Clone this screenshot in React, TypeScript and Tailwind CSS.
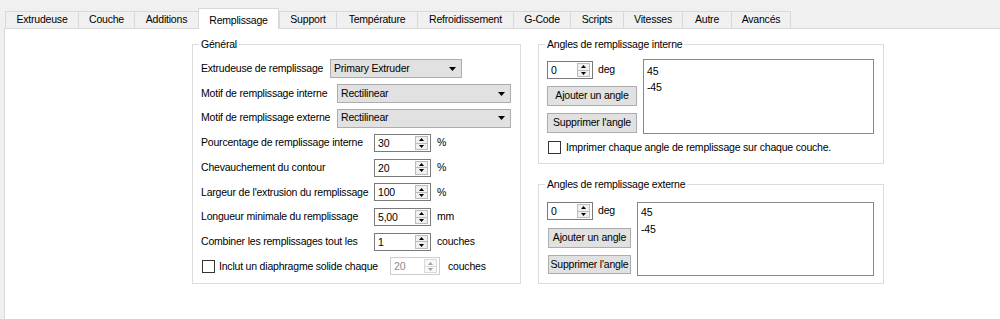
import React from 'react';

const tabs: [string, string][] = [
    ['Extrudeuse', 'w-[73px]'],
    ['Couche', 'w-[56px]'],
    ['Additions', 'w-[64px]'],
    ['Remplissage', 'w-[81px]'],
    ['Support', 'w-[57px]'],
    ['Température', 'w-[81px]'],
    ['Refroidissement', 'w-[96px]'],
    ['G-Code', 'w-[57px]'],
    ['Scripts', 'w-[53px]'],
    ['Vitesses', 'w-[59px]'],
    ['Autre', 'w-[49px]'],
    ['Avancés', 'w-[60px] border-r'],
];

function SpinArrows({ disabled }: { disabled?: boolean }) {
    const fill = disabled ? '#a0a0a0' : '#000000';
    return (
        <div
            className={`my-[1px] mr-[2px] flex w-[13px] flex-col border ${
                disabled ? 'border-[#d9d9d9] bg-[#f7f7f7]' : 'border-[#bcbcbc] bg-[#f0f0f0]'
            }`}
        >
            <div className="flex flex-1 items-center justify-center">
                <svg width="5" height="3" viewBox="0 0 5 3">
                    <path d="M0 3 L2.5 0 L5 3 Z" fill={fill} />
                </svg>
            </div>
            <div className={`h-px ${disabled ? 'bg-[#dcdcdc]' : 'bg-[#bcbcbc]'}`} />
            <div className="flex flex-1 items-center justify-center">
                <svg width="5" height="3" viewBox="0 0 5 3">
                    <path d="M0 0 L5 0 L2.5 3 Z" fill={fill} />
                </svg>
            </div>
        </div>
    );
}

function Spin({ value, width, disabled }: { value: string; width: string; disabled?: boolean }) {
    return (
        <div
            className={`flex h-[18px] shrink-0 bg-white ${width} border ${
                disabled ? 'border-[#cccccc] text-[#8a8a8a]' : 'border-[#7a7a7a]'
            }`}
        >
            <div className="flex-1 pl-[3px] leading-[16px]">{value}</div>
            <SpinArrows disabled={disabled} />
        </div>
    );
}

function Combo({ value, width }: { value: string; width: string }) {
    return (
        <div
            className={`flex h-[19px] shrink-0 items-center justify-between border border-[#adadad] bg-[#e1e1e1] pl-[3px] pr-[5px] ${width}`}
        >
            <span>{value}</span>
            <svg width="7" height="4" viewBox="0 0 7 4">
                <path d="M0 0 L7 0 L3.5 4 Z" fill="#000" />
            </svg>
        </div>
    );
}

function Button({ label, width, height }: { label: string; width: string; height: string }) {
    return (
        <div
            className={`flex items-center justify-center border border-[#adadad] bg-[#e1e1e1] whitespace-nowrap ${width} ${height}`}
        >
            {label}
        </div>
    );
}

function Check() {
    return <div className="h-[13px] w-[13px] shrink-0 border border-[#333333] bg-white" />;
}

function Group({ title, className, children }: { title: string; className: string; children: React.ReactNode }) {
    return (
        <div className={`relative border border-[#dcdcdc] ${className}`}>
            <span className="absolute -top-[9px] left-[6px] bg-white px-[2px] leading-[16px]">{title}</span>
            {children}
        </div>
    );
}

function SpinRow({ label, value, unit }: { label: string; value: string; unit: string }) {
    return (
        <div className="flex h-[24.7px] items-center">
            <span className="w-[173px] shrink-0 whitespace-nowrap">{label}</span>
            <Spin value={value} width="w-[57px]" />
            <span className="ml-[6px]">{unit}</span>
        </div>
    );
}

export default function App() {
    return (
        <div className="flex h-[319px] w-[1000px] flex-col overflow-hidden bg-[#f0f0f0] font-['Liberation_Sans',Arial,sans-serif] text-[10.5px] tracking-[-0.2px] text-black">
            <div className="relative z-10 flex h-[28px] shrink-0 items-end pl-[5px]">
                {tabs.map(([name, w]) =>
                    name === 'Remplissage' ? (
                        <div
                            key={name}
                            className={`-mb-px flex h-[21px] justify-center border-x border-t border-[#d9d9d9] bg-white pt-[3px] leading-[16px] ${w}`}
                        >
                            {name}
                        </div>
                    ) : (
                        <div
                            key={name}
                            className={`flex h-[17px] items-center justify-center border-l border-t border-[#d9d9d9] bg-[#f0f0f0] ${w}`}
                        >
                            {name}
                        </div>
                    )
                )}
            </div>

            <div className="ml-[4px] flex flex-1 gap-[17px] border-l border-t border-[#d9d9d9] bg-white pl-[187px] pt-[15px]">
                <Group title="Général" className="h-[240px] w-[329px] pl-[8px] pt-[11.65px]">
                    <div className="flex h-[24.7px] items-center">
                        <span className="w-[129px] shrink-0 whitespace-nowrap">Extrudeuse de remplissage</span>
                        <Combo value="Primary Extruder" width="w-[132px]" />
                    </div>
                    <div className="flex h-[24.7px] items-center">
                        <span className="w-[136px] shrink-0 whitespace-nowrap">Motif de remplissage interne</span>
                        <Combo value="Rectilinear" width="w-[174px]" />
                    </div>
                    <div className="flex h-[24.7px] items-center">
                        <span className="w-[136px] shrink-0 whitespace-nowrap">Motif de remplissage externe</span>
                        <Combo value="Rectilinear" width="w-[174px]" />
                    </div>
                    <SpinRow label="Pourcentage de remplissage interne" value="30" unit="%" />
                    <SpinRow label="Chevauchement du contour" value="20" unit="%" />
                    <SpinRow label="Largeur de l'extrusion du remplissage" value="100" unit="%" />
                    <SpinRow label="Longueur minimale du remplissage" value="5,00" unit="mm" />
                    <SpinRow label="Combiner les remplissages tout les" value="1" unit="couches" />
                    <div className="flex h-[24.7px] items-center">
                        <div className="ml-[1px]">
                            <Check />
                        </div>
                        <span className="ml-[4px] w-[171px] shrink-0 whitespace-nowrap">Inclut un diaphragme solide chaque</span>
                        <Spin value="20" width="w-[50px]" disabled />
                        <span className="ml-[8px]">couches</span>
                    </div>
                </Group>

                <div className="flex flex-col gap-[20px]">
                    <Group title="Angles de remplissage interne" className="h-[120px] w-[346px] pl-[8px] pt-[14px]">
                        <div className="flex items-start">
                            <div className="flex w-[90px] flex-col pt-[2px]">
                                <div className="flex items-center">
                                    <Spin value="0" width="w-[46px]" />
                                    <span className="ml-[5px]">deg</span>
                                </div>
                                <div className="mt-[7px]">
                                    <Button label="Ajouter un angle" width="w-[90px]" height="h-[20px]" />
                                </div>
                                <div className="mt-[7px]">
                                    <Button label="Supprimer l'angle" width="w-[90px]" height="h-[20px]" />
                                </div>
                            </div>
                            <div className="ml-[6px] h-[75px] w-[231px] border border-[#828790] bg-white pl-[3px] pt-[3px] leading-[16px]">
                                <div>45</div>
                                <div>-45</div>
                            </div>
                        </div>
                        <div className="mt-[6px] ml-[1px] flex items-center">
                            <Check />
                            <span className="ml-[5px]">Imprimer chaque angle de remplissage sur chaque couche.</span>
                        </div>
                    </Group>

                    <Group title="Angles de remplissage externe" className="h-[100px] w-[346px] pl-[8px] pt-[17px]">
                        <div className="flex items-start">
                            <div className="flex w-[84px] flex-col">
                                <div className="flex items-center">
                                    <Spin value="0" width="w-[46px]" />
                                    <span className="ml-[5px]">deg</span>
                                </div>
                                <div className="mt-[8px] ml-[1px]">
                                    <Button label="Ajouter un angle" width="w-[83px]" height="h-[20px]" />
                                </div>
                                <div className="mt-[7px] ml-[1px]">
                                    <Button label="Supprimer l'angle" width="w-[83px]" height="h-[19px]" />
                                </div>
                            </div>
                            <div className="ml-[6px] h-[74px] w-[237px] border border-[#828790] bg-white pl-[3px] pt-[1px] leading-[16.5px]">
                                <div>45</div>
                                <div>-45</div>
                            </div>
                        </div>
                    </Group>
                </div>
            </div>
        </div>
    );
}
